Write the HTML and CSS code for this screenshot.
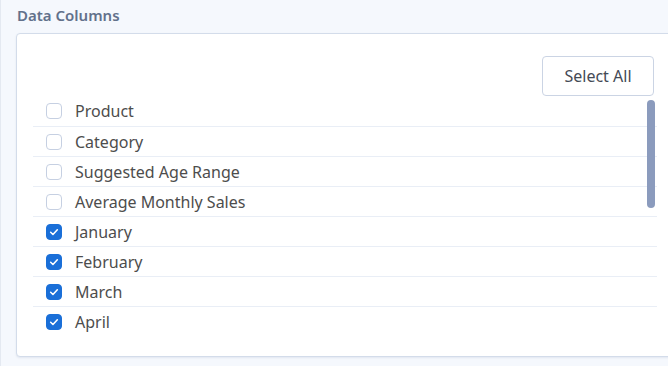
FILE: index.html
```html
<!DOCTYPE html>
<html>
<head>
    <title>Data Columns</title>
    <link rel="stylesheet" href="styles.css">
</head>
<body>
    <div class="section">
        <h3 class="section-title">Data Columns</h3>
        <div class="panel">
            <div class="toolbar">
                <button class="select-all">Select All</button>
            </div>
            <div class="list-wrap">
                <ul class="column-list">
                    <li class="column-row"><span class="box"></span>Product</li>
                    <li class="column-row"><span class="box"></span>Category</li>
                    <li class="column-row"><span class="box"></span>Suggested Age Range</li>
                    <li class="column-row"><span class="box"></span>Average Monthly Sales</li>
                    <li class="column-row"><span class="box checked"><svg viewBox="0 0 16 16"><path d="M4.2 8.3l2.6 2.5 5-5.4"/></svg></span>January</li>
                    <li class="column-row"><span class="box checked"><svg viewBox="0 0 16 16"><path d="M4.2 8.3l2.6 2.5 5-5.4"/></svg></span>February</li>
                    <li class="column-row"><span class="box checked"><svg viewBox="0 0 16 16"><path d="M4.2 8.3l2.6 2.5 5-5.4"/></svg></span>March</li>
                    <li class="column-row"><span class="box checked"><svg viewBox="0 0 16 16"><path d="M4.2 8.3l2.6 2.5 5-5.4"/></svg></span>April</li>
                </ul>
                <div class="scroll-thumb"></div>
            </div>
        </div>
    </div>
</body>
</html>
```

FILE: styles.css
```css
html, body {
    margin: 0;
    height: 100%;
}
body {
    font-family: "Noto Sans", "Open Sans", sans-serif;
    background: #f5f8fd;
    border-left: 1px solid #e4e9f1;
    overflow: hidden;
}
.section {
    padding: 6px 0 0 15px;
}
.section-title {
    margin: 0 0 8px 1px;
    font-size: 15px;
    font-weight: 600;
    color: #62718b;
    line-height: 19px;
}
.panel {
    width: 624px;
    padding: 22px 16px 20px 16px;
    background: #fff;
    border: 1px solid #d3dcea;
    border-radius: 4px;
    box-shadow: 0 1px 2px rgba(90, 110, 150, 0.12);
}
.toolbar {
    display: flex;
    justify-content: flex-end;
    padding-right: 3px;
}
.select-all {
    width: 112px;
    height: 40px;
    font-family: inherit;
    font-size: 16px;
    color: #444a55;
    background: #fff;
    border: 1px solid #cbd4e4;
    border-radius: 4px;
    cursor: pointer;
}
.list-wrap {
    position: relative;
}
.column-list {
    list-style: none;
    margin: 0;
    padding: 0;
    height: 240px;
    overflow: hidden;
}
/* overlay scrollbar thumb */
.scroll-thumb {
    position: absolute;
    top: 4px;
    right: 2px;
    width: 8px;
    height: 108px;
    border-radius: 4px;
    background: #8b9bbd;
}
.column-row {
    display: flex;
    align-items: center;
    height: 30px;
    box-sizing: border-box;
    padding-left: 13px;
    font-size: 16px;
    color: #4d4d4d;
}
.column-row + .column-row {
    border-top: 1px solid #e9eef6;
}
.box {
    display: flex;
    align-items: center;
    justify-content: center;
    width: 16px;
    height: 16px;
    box-sizing: border-box;
    margin-right: 13px;
    border: 1px solid #c6d0e2;
    border-radius: 4px;
    background: #fff;
}
.box.checked {
    background: #1a6fd8;
    border-color: #1a6fd8;
}
.box svg {
    width: 14px;
    height: 14px;
    fill: none;
    stroke: #fff;
    stroke-width: 1.8;
    stroke-linecap: round;
    stroke-linejoin: round;
}
```
